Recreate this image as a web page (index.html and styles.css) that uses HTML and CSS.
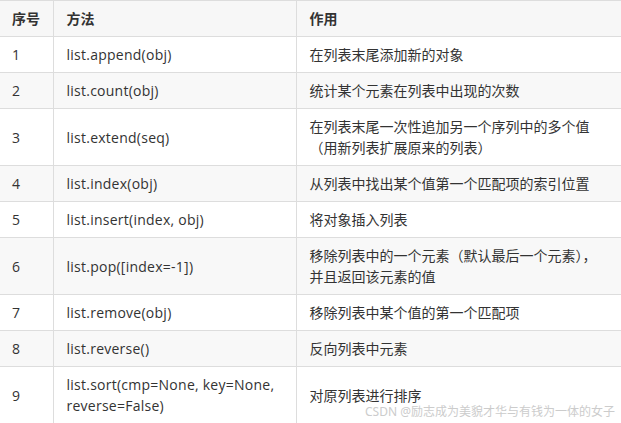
FILE: index.html
```html
<!DOCTYPE html>
<html>
<head>
<meta charset="utf-8">
<link rel="stylesheet" href="styles.css">
</head>
<body>
<div class="wrap">
<table class="tbl">
<colgroup><col class="c1"><col class="c2"><col class="c3"></colgroup>
<thead>
<tr><th>序号</th><th>方法</th><th>作用</th></tr>
</thead>
<tbody>
<tr><td>1</td><td class="code">list.append(obj)</td><td>在列表末尾添加新的对象</td></tr>
<tr><td>2</td><td class="code">list.count(obj)</td><td>统计某个元素在列表中出现的次数</td></tr>
<tr><td>3</td><td class="code">list.extend(seq)</td><td>在列表末尾一次性追加另一个序列中的多个值<br>（用新列表扩展原来的列表）</td></tr>
<tr><td>4</td><td class="code">list.index(obj)</td><td>从列表中找出某个值第一个匹配项的索引位置</td></tr>
<tr><td>5</td><td class="code">list.insert(index, obj)</td><td>将对象插入列表</td></tr>
<tr><td>6</td><td class="code">list.pop([index=-1])</td><td>移除列表中的一个元素（默认最后一个元素），<br>并且返回该元素的值</td></tr>
<tr><td>7</td><td class="code">list.remove(obj)</td><td>移除列表中某个值的第一个匹配项</td></tr>
<tr><td>8</td><td class="code">list.reverse()</td><td>反向列表中元素</td></tr>
<tr><td>9</td><td class="code">list.sort(cmp=None, key=None,<br>reverse=False)</td><td>对原列表进行排序</td></tr>
</tbody>
</table>
<div class="mark">CSDN @励志成为美貌才华与有钱为一体的女子</div>
</div>
</body>
</html>
```
FILE: styles.css
```css
html, body {
  margin: 0;
  padding: 0;
  background: #fff;
  overflow: hidden;
}
.wrap {
  position: relative;
  width: 621px;
  height: 423px;
  overflow: hidden;
}
.tbl {
  border-collapse: collapse;
  table-layout: fixed;
  width: 640px;
  font-family: "Open Sans", "Noto Sans CJK SC", sans-serif;
  font-size: 14px;
  color: #333;
}
.c1 { width: 53px; }
.c2 { width: 243px; }
.c3 { width: 344px; }
.tbl th, .tbl td {
  border: 1px solid #dddddd;
  padding: 7px 13px;
  line-height: 21px;
  text-align: left;
  vertical-align: middle;
  white-space: nowrap;
}
.tbl tr > :first-child { border-left: none; padding-left: 12px; }
.tbl .code { letter-spacing: 0.25px; }
.tbl th {
  font-weight: bold;
  background: #f7f7f7;
}
.tbl tbody tr:nth-child(even) td {
  background: #f8f8f8;
}
.mark {
  position: absolute;
  right: 6px;
  bottom: 3px;
  font-family: "Noto Sans", "Noto Sans CJK SC", sans-serif;
  font-size: 12px;
  color: #cccccc;
  line-height: 16px;
}
```
